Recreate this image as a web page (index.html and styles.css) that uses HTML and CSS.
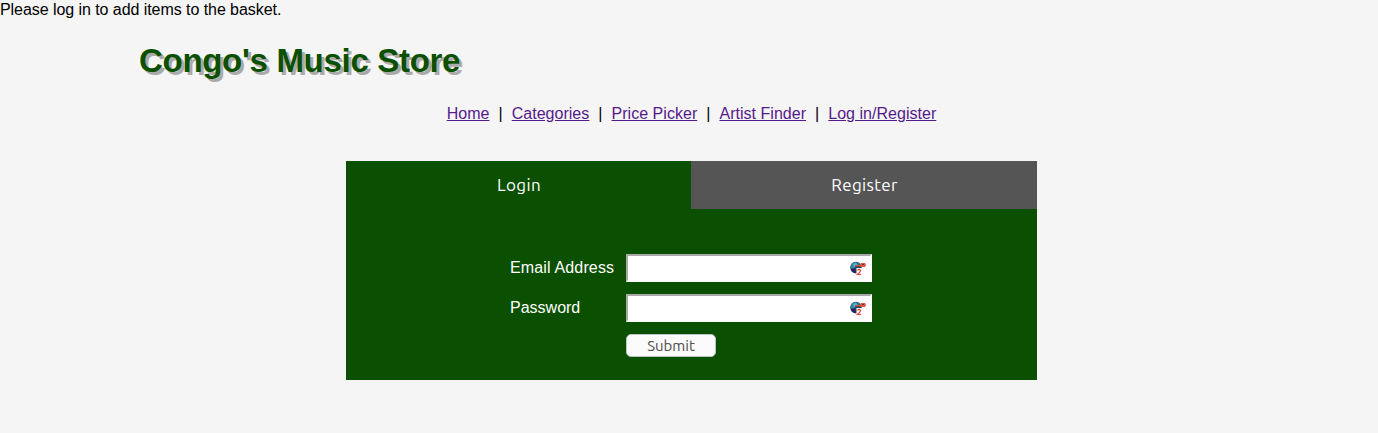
FILE: index.html
```html
<!DOCTYPE html>
<html lang="en">
<head>
<meta charset="utf-8">
<title>Congo's Music Store</title>
<link rel="stylesheet" href="styles.css">
</head>
<body>
<svg class="symbols" aria-hidden="true">
  <symbol id="key" viewBox="0 0 17 15">
    <circle cx="6" cy="6.6" r="5.8" fill="#25486f"/>
    <path d="M1 5Q2 1 6 1L10 3 6 5 4 9 1 7Z" fill="#3184ad"/>
    <path d="M3 3L6 2 7 4 4 6Z" fill="#62b5c5"/>
    <path d="M1 8L5 7 6 12Q2 12 1 8Z" fill="#28245e"/>
    <path d="M6.5 7H12V15H6.5Z" fill="#fff"/>
    <path d="M5 4H10L11 2H15L16 4 15 6H11L10 5.5H6Z" fill="#d8563c"/>
    <path d="M5 5.5H10M12 3.5H14" stroke="#713b32" fill="none"/>
    <path d="M7.5 9.5Q8 8.4 9.2 8.4 10.7 8.5 10.5 9.8 10.3 10.9 7.6 13.3H11" fill="none" stroke="#f04444" stroke-width="1.2"/>
  </symbol>
</svg>
<div class="notice">Please log in to add items to the basket.</div>
<header class="header"><h1 class="title">Congo's Music Store</h1></header>
<nav class="nav">
  <a class="link" href="#">Home</a><span>|</span><a class="link" href="#">Categories</a><span>|</span><a class="link" href="#">Price Picker</a><span>|</span><a class="link" href="#">Artist Finder</a><span>|</span><a class="link" href="#">Log in/Register</a>
</nav>
<main class="panel">
  <div class="tabs">
    <button class="tab active" type="button">Login</button>
    <button class="tab" type="button">Register</button>
  </div>
  <form class="form">
    <label class="label-email" for="email">Email Address</label>
    <div class="field"><input class="input" id="email" type="text"><svg class="key"><use href="#key"/></svg></div>
    <label for="password">Password</label>
    <div class="field"><input class="input" id="password" type="password"><svg class="key"><use href="#key"/></svg></div>
    <button class="submit" type="button">Submit</button>
  </form>
</main>
</body>
</html>
```
FILE: styles.css
```css
* { box-sizing: border-box; }
body {
  margin: 0;
  background: #f5f5f5;
  color: #000;
  font: 16px/18px "Liberation Sans", Arial, sans-serif;
}
.symbols { display: none; }
.notice { height: 19px; padding-top: 1px; letter-spacing: -0.06px; }
.header { padding: 23px 0 0 139px; }
.title {
  margin: 0;
  color: #0b5000;
  font-size: 33px;
  line-height: 37px;
  letter-spacing: -0.3px;
  text-shadow: 3px 3px #aaa;
}
.nav {
  display: flex;
  justify-content: center;
  gap: 9px;
  margin-top: 26px;
  padding-left: 5px;
  letter-spacing: 0.03px;
}
.link { color: #551a8b; }
.panel {
  width: 691px;
  height: 219px;
  margin: 38px 0 0 346px;
  background: #0b5000;
  color: #fff;
}
.tabs { display: grid; grid-template-columns: 345px 346px; height: 48px; }
.tab {
  border: 0;
  padding: 0 0 0 1px;
  background: #555;
  color: #fff;
  font: 17px/20px Ubuntu, "Noto Sans", sans-serif;
  letter-spacing: 0.35px;
}
.active { background: #0b5000; }
.form {
  display: grid;
  grid-template-columns: 104px 246px;
  grid-template-rows: 28px 28px 23px;
  gap: 12px;
  align-items: center;
  padding: 45px 0 0 164px;
}
.label-email { white-space: nowrap; letter-spacing: 0.15px; }
.field { position: relative; height: 28px; }
.input {
  display: block;
  width: 246px;
  height: 28px;
  border: 2px solid #fff;
  border-top-color: #a9a9a9;
  border-left-color: #a9a9a9;
  background: #fff;
}
.key { position: absolute; right: 5px; top: 7px; width: 17px; height: 15px; }
.submit {
  grid-column: 2;
  width: 90px;
  height: 23px;
  padding: 0 0 1px;
  border: 1px solid #b9c5c5;
  border-radius: 5px;
  background: #fbfbfb;
  color: #4c4c4c;
  font: 15px/19px Ubuntu, "Noto Sans", sans-serif;
}
```
